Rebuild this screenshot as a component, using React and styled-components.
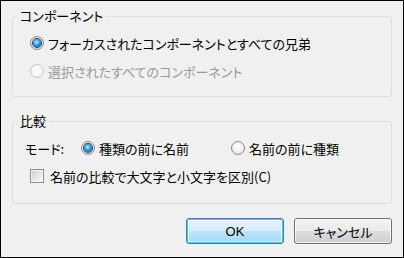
import React, { useState } from 'react'
import styled, { createGlobalStyle } from 'styled-components';

const Global = createGlobalStyle`
  html, body { margin:0; padding:0; background:#f0f0f0; }
  *{ box-sizing:border-box; }
`

function Radio({ checked, disabled, label, onClick }) {
  return (
    <Option disabled={disabled} onClick={disabled ? undefined : onClick}>
      <RadioMark disabled={disabled}>{checked && <Dot />}</RadioMark>
      <span>{label}</span>
    </Option>
  )
}

function App() {
  const [scope, setScope] = useState('focus');
  const [mode, setMode] = useState('type');
  const [cased, setCased] = useState(false);

  return (
    <Dialog>
      <Global />
      <Group h={81}>
        <Legend>コンポーネント</Legend>
        <Row indent={17}>
          <Radio checked={scope === 'focus'} label="フォーカスされたコンポーネントとすべての兄弟" onClick={() => setScope('focus')} />
        </Row>
        <Row indent={17}>
          <Radio disabled checked={scope === 'all'} label="選択されたすべてのコンポーネント" />
        </Row>
      </Group>

      <Group h={83} top={24}>
        <Legend>比較</Legend>
        <Row indent={12}>
          <ModeLabel>モード:</ModeLabel>
          <Slot w={150}>
            <Radio checked={mode === 'type'} label="種類の前に名前" onClick={() => setMode('type')} />
          </Slot>
          <Slot>
            <Radio checked={mode === 'name'} label="名前の前に種類" onClick={() => setMode('name')} />
          </Slot>
        </Row>
        <Row indent={17} gap={8}>
          <Option onClick={() => setCased(!cased)}>
            <Check>{cased && '✓'}</Check>
            <span>名前の比較で大文字と小文字を区別(C)</span>
          </Option>
        </Row>
      </Group>

      <Buttons>
        <Button primary>OK</Button>
        <Button>キャンセル</Button>
      </Buttons>
    </Dialog>
  )
}

export default App;

const Dialog = styled.div`
  width:404px;
  height:258px;
  border:1px solid #000;
  background:#f0f0f0;
  padding:15px 11px 0 11px;
  display:flex;
  flex-direction:column;
  font-family:"Noto Sans CJK JP", "Liberation Sans", sans-serif;
  font-size:13px;
  font-feature-settings:"palt";
  color:#000;
`

const Group = styled.div`
  position:relative;
  height:${p => p.h}px;
  margin-top:${p => p.top || 0}px;
  border:1px solid #d5dfe5;
  border-radius:3px;
  padding-top:16px;
  display:flex;
  flex-direction:column;
`

const Legend = styled.div`
  position:absolute;
  left:4px;
  top:-10px;
  padding:0 3px;
  background:#f0f0f0;
  line-height:18px;
`

const Row = styled.div`
  height:20px;
  display:flex;
  align-items:center;
  padding-left:${p => p.indent}px;
  & + & { margin-top:${p => p.gap || 9}px; }
`

const ModeLabel = styled.span`
  width:56px;
`

const Slot = styled.div`
  width:${p => p.w ? p.w + 'px' : 'auto'};
  display:flex;
`

const Option = styled.label`
  display:flex;
  align-items:center;
  gap:4px;
  white-space:nowrap;
  color:${p => p.disabled ? '#9a9a9a' : '#000'};
  cursor:default;
`

const RadioMark = styled.span`
  width:14px;
  height:14px;
  border-radius:50%;
  border:1px solid ${p => p.disabled ? '#c5c5c5' : '#8a8a8a'};
  background:${p => p.disabled
    ? 'radial-gradient(circle at 50% 40%, #fbfbfb 0%, #f0f0f0 100%)'
    : 'radial-gradient(circle at 50% 40%, #ffffff 0%, #eeeeee 55%, #cfcfcf 100%)'};
  display:flex;
  align-items:center;
  justify-content:center;
  flex:none;
`

const Dot = styled.span`
  width:8px;
  height:8px;
  border-radius:50%;
  background:radial-gradient(circle at 45% 40%, #c4efff 0%, #3aa6ea 40%, #0d4f94 85%, #0a2f5e 100%);
  box-shadow:0 0 0 1px #183d6a;
`

const Check = styled.span`
  width:14px;
  height:14px;
  border:1px solid #8e8f8f;
  background:linear-gradient(135deg, #cbcfd2 0%, #e4e6e7 50%, #fbfbfb 100%);
  box-shadow:inset 0 0 0 1px #f4f4f4;
  flex:none;
  font-size:11px;
  line-height:12px;
  text-align:center;
  margin-right:2px;
`

const Buttons = styled.div`
  display:flex;
  justify-content:flex-end;
  gap:10px;
  margin-top:14px;
`

const Button = styled.button`
  width:98px;
  height:26px;
  border-radius:3px;
  font-family:"Liberation Sans", "Noto Sans CJK JP", sans-serif;
  font-size:13px;
  font-feature-settings:"palt";
  color:#000;
  padding:0;
  border:1px solid ${p => p.primary ? '#3c7fb1' : '#707070'};
  background:${p => p.primary
    ? 'linear-gradient(#e5f4fc 0%, #d4edfb 50%, #bde4f9 51%, #a7d9f5 100%)'
    : 'linear-gradient(#f2f2f2 0%, #ebebeb 50%, #dddddd 51%, #cfcfcf 100%)'};
  box-shadow:${p => p.primary ? 'inset 0 0 0 1px #48c6f5, inset 0 0 0 2px rgba(255,255,255,.5)' : 'inset 0 0 0 1px rgba(255,255,255,.7)'};
`
